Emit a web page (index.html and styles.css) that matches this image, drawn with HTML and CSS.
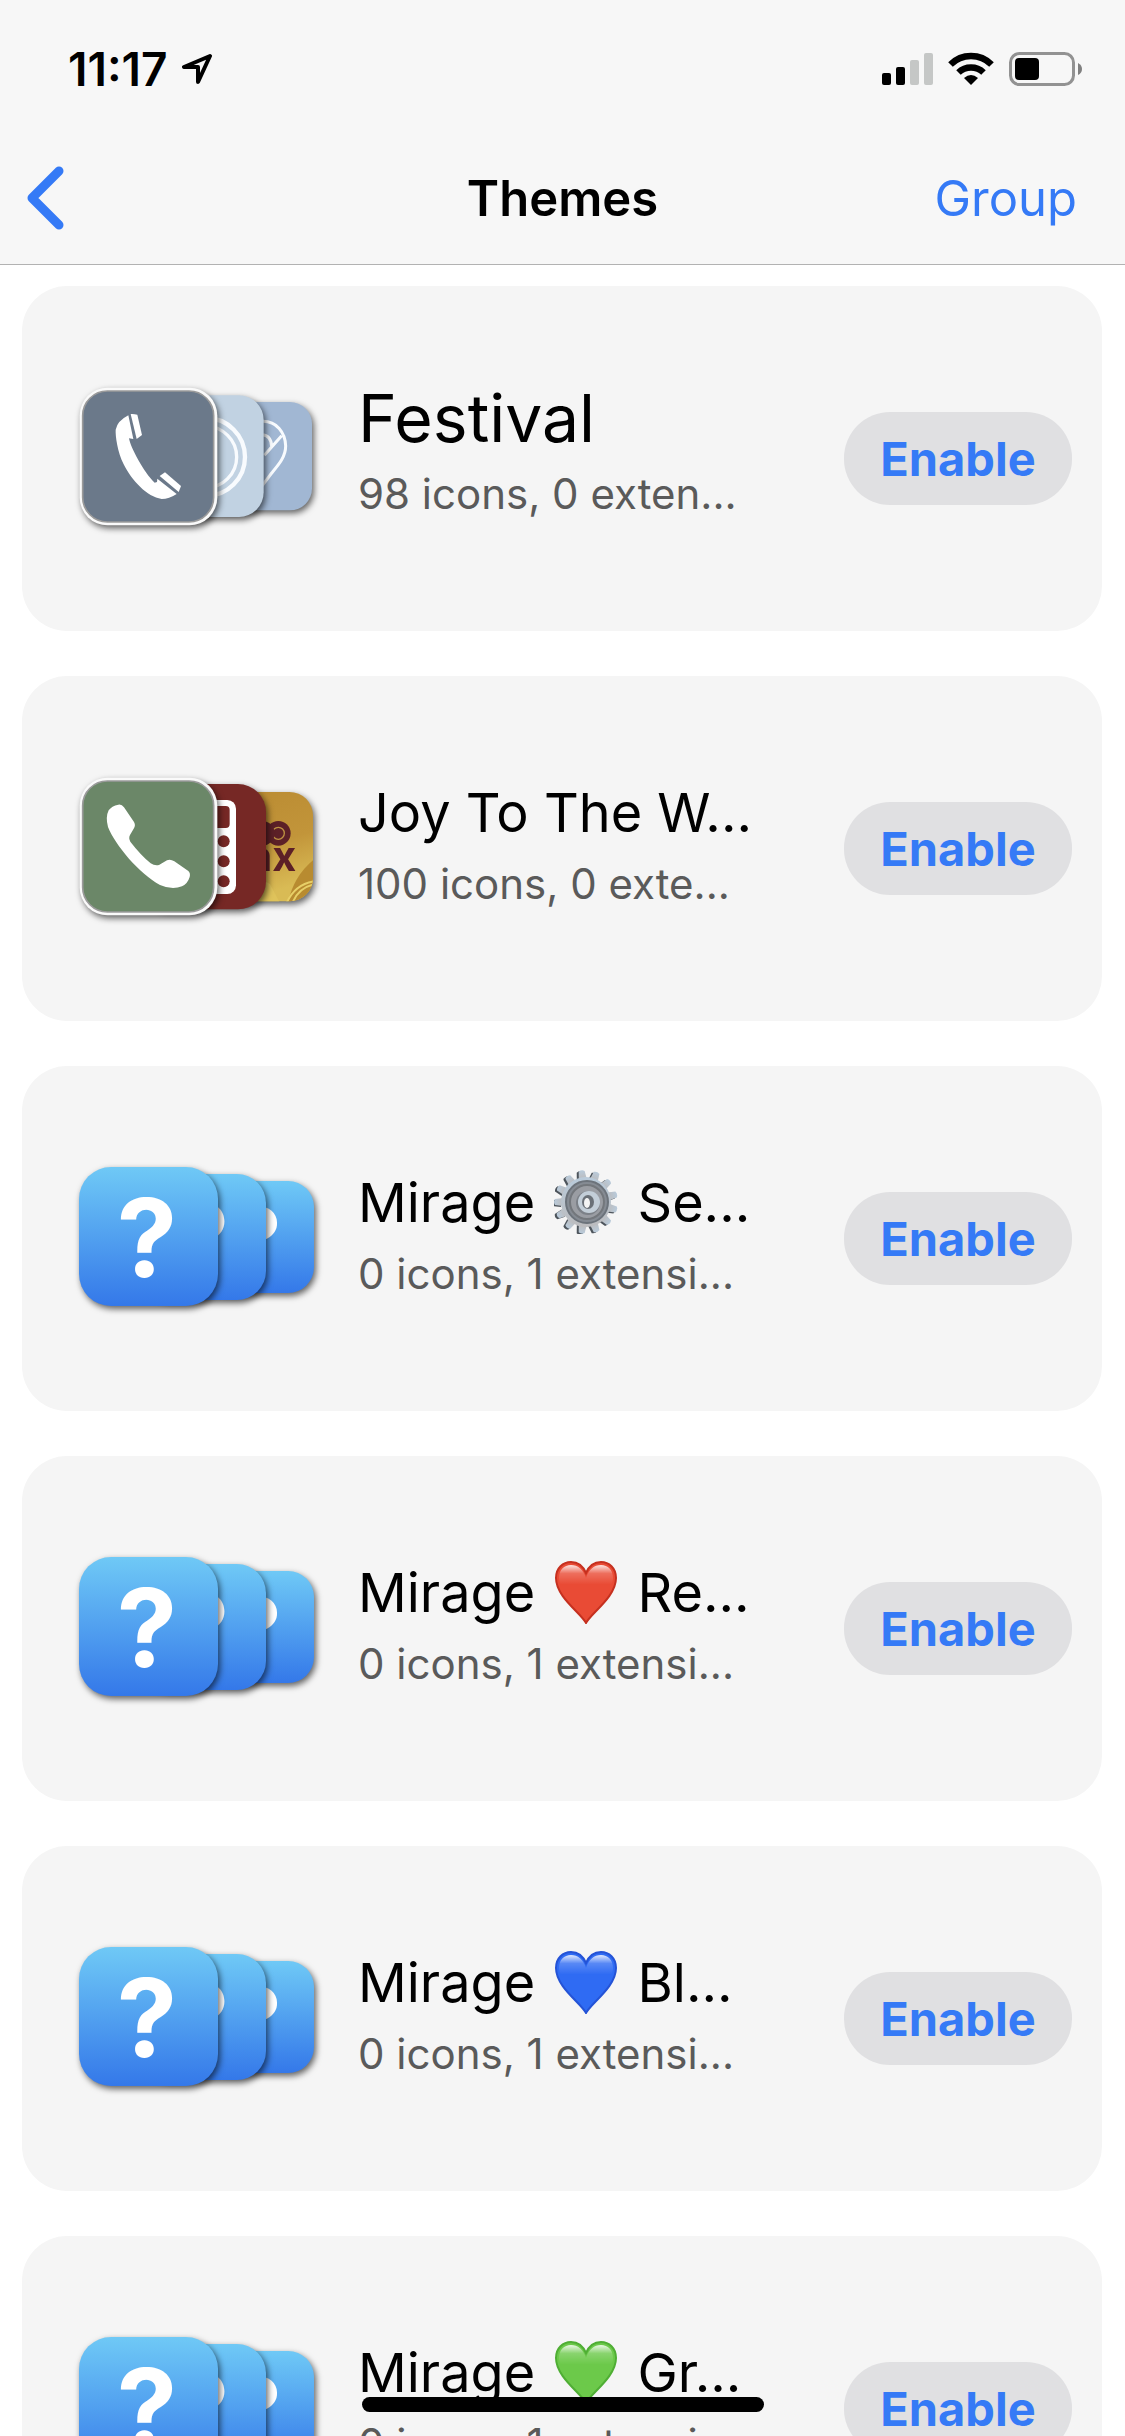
FILE: index.html
```html
<!DOCTYPE html>
<html lang="en">
<head>
    <meta charset="UTF-8">
    <meta name="viewport" content="width=device-width, initial-scale=1.0">
    <title>Themes</title>
    <link rel="stylesheet" href="styles.css">
</head>
<body>
    <!-- Shared icon artwork -->
    <svg class="defs" aria-hidden="true">
        <defs>
            <linearGradient id="blueFade" x1="0" y1="0" x2="0" y2="1">
                <stop offset="0" stop-color="#6fc9f6"/>
                <stop offset="1" stop-color="#3478e9"/>
            </linearGradient>
            <linearGradient id="goldFade" x1="0" y1="0" x2="0.3" y2="1">
                <stop offset="0" stop-color="#b98a31"/>
                <stop offset="0.6" stop-color="#c2953a"/>
                <stop offset="1" stop-color="#d9bb55"/>
            </linearGradient>
            <linearGradient id="gearFade" x1="0" y1="0" x2="0" y2="1">
                <stop offset="0" stop-color="#b9cbdb"/>
                <stop offset="1" stop-color="#bcbcbe"/>
            </linearGradient>
            <linearGradient id="shine" x1="0" y1="0" x2="0" y2="1">
                <stop offset="0" stop-color="#fff" stop-opacity="0.85"/>
                <stop offset="0.3" stop-color="#fff" stop-opacity="0.2"/>
                <stop offset="0.7" stop-color="#fff" stop-opacity="0"/>
            </linearGradient>
            <path id="heartShape" d="M32 63C27 53 2 37 2 18C2 8 9 2 17 2C24 2 29 6 32 13C35 6 40 2 47 2C55 2 62 8 62 18C62 37 37 53 32 63Z"/>
            <path id="heartShine" d="M32 18C29 9 24 5 17 5C10 5 5 10 5 18C5 28 15 33 32 33C49 33 59 28 59 18C59 10 54 5 47 5C40 5 35 9 32 18Z"/>
            <symbol id="unknownIcon" viewBox="0 0 139 139">
                <rect width="139" height="139" rx="32" fill="url(#blueFade)"/>
                <text class="icon-question" x="68" y="110" text-anchor="middle">?</text>
            </symbol>
            <path id="tooth" d="M28 9L29 1Q32 -1 35 1L36 9Z"/>
            <g id="teeth">
                <use href="#tooth" transform="rotate(-8 32 32)"/>
                <use href="#tooth" transform="rotate(20 32 32)"/>
                <use href="#tooth" transform="rotate(48 32 32)"/>
                <use href="#tooth" transform="rotate(76 32 32)"/>
                <use href="#tooth" transform="rotate(104 32 32)"/>
                <use href="#tooth" transform="rotate(132 32 32)"/>
                <use href="#tooth" transform="rotate(160 32 32)"/>
                <use href="#tooth" transform="rotate(188 32 32)"/>
                <use href="#tooth" transform="rotate(216 32 32)"/>
                <use href="#tooth" transform="rotate(244 32 32)"/>
                <use href="#tooth" transform="rotate(270 32 32)"/>
                <use href="#tooth" transform="rotate(297 32 32)"/>
                <use href="#tooth" transform="rotate(324 32 32)"/>
            </g>
        </defs>
    </svg>

    <header class="header">
        <div class="status-bar">
            <div class="status-left">
                <span class="time">11:17</span>
                <svg class="location" viewBox="0 0 31 32" aria-hidden="true">
                    <path d="M28 3L2 14H16V29Z" fill="none" stroke="#000" stroke-width="4" stroke-linejoin="round"/>
                </svg>
            </div>
            <div class="status-right">
                <svg class="signal" viewBox="0 0 51 34" aria-hidden="true">
                    <rect x="0" y="21" width="9" height="12" rx="2"/>
                    <rect x="14" y="15" width="9" height="18" rx="2"/>
                    <rect x="28" y="8" width="9" height="25" rx="2" fill="#c5c7c6"/>
                    <rect x="42" y="1" width="9" height="32" rx="2" fill="#c5c7c6"/>
                </svg>
                <svg class="wifi" viewBox="0 0 46 34" aria-hidden="true">
                    <path d="M2.500 12.500A29 29 0 0 1 43.500 12.500" fill="none" stroke="#000" stroke-width="6.500"/>
                    <path d="M10.500 20.500A18 18 0 0 1 35.500 20.500" fill="none" stroke="#000" stroke-width="6.500"/>
                    <path d="M23 33L16 26Q23 20 30 26Z"/>
                </svg>
                <svg class="battery" viewBox="0 0 74 34" aria-hidden="true">
                    <rect x="1.500" y="1.500" width="63" height="31" rx="9" fill="none" stroke="#929292" stroke-width="3"/>
                    <rect x="6" y="6" width="24" height="22" rx="4"/>
                    <path d="M69 11Q73 13 73 17T69 23Z" fill="#808080"/>
                </svg>
            </div>
        </div>
        <nav class="nav-bar">
            <a class="back" href="#" aria-label="Back">
                <svg class="chevron" viewBox="0 0 38 64" aria-hidden="true">
                    <path d="M33 5L6 32L33 59" fill="none" stroke="#357af6" stroke-width="9" stroke-linecap="round" stroke-linejoin="round"/>
                </svg>
            </a>
            <h1 class="nav-title">Themes</h1>
            <button class="group-btn" type="button">Group</button>
        </nav>
    </header>

    <main>
        <ul class="theme-list">
            <li class="theme">
                <div class="icons">
                    <svg class="icon icon-front" viewBox="56 82 417 417" aria-hidden="true">
                        <rect x="58" y="84" width="413" height="413" rx="84" fill="#fafafa"/>
                        <rect x="67" y="94" width="393" height="393" rx="74" fill="#6b798a" stroke="#9a9a9a" stroke-width="5"/>
                        <path fill="#fff" d="M204 167L219 238L206 236C210 262 250 338 283 369L290 367L291 357L349 403Q326 418 304 418C260 412 214 362 190 314C171 276 165 228 166 210Q171 184 204 167Z"/>
                        <path fill="#fff" d="M211 163Q220 162 231 165L245 226L229 238Z"/>
                        <path fill="#fff" d="M298 349L314 338L362 379L355 397Z"/>
                    </svg>
                    <svg class="icon icon-middle" viewBox="240 103 378 378" aria-hidden="true">
                        <rect x="243" y="107" width="368" height="365" rx="74" fill="#c1d2e2"/>
                        <circle cx="438" cy="292" r="117" fill="none" stroke="#f8fbfe" stroke-width="13"/>
                        <circle cx="438" cy="292" r="92" fill="none" stroke="#f8fbfe" stroke-width="10"/>
                    </svg>
                    <svg class="icon icon-back" viewBox="426 125 336 336" aria-hidden="true">
                        <rect x="429" y="128" width="327" height="325" rx="66" fill="#a1b7d3"/>
                        <path d="M605 186C650 184 676 220 677 260C677 293 655 317 635 341L600 388M665 229L613 288M605 226C624 227 634 240 635 261" fill="none" stroke="#f8fbfe" stroke-width="9"/>
                    </svg>
                </div>
                <div class="theme-text">
                    <h2 class="theme-title large">Festival</h2>
                    <p class="theme-info">98 icons, 0 exten...</p>
                </div>
                <button class="enable-btn" type="button">Enable</button>
            </li>

            <li class="theme">
                <div class="icons">
                    <svg class="icon icon-front" viewBox="56 82 417 417" aria-hidden="true">
                        <rect x="58" y="84" width="413" height="413" rx="84" fill="#fafafa"/>
                        <rect x="67" y="94" width="393" height="393" rx="74" fill="#6b8768" stroke="#9a9a9a" stroke-width="5"/>
                        <path fill="#fff" d="M174 165Q184 163 191 173L221 217Q227 227 220 237L209 256Q204 265 210 276Q240 315 271 341Q283 349 296 346L320 332Q330 327 342 335L384 364Q391 370 388 382Q382 402 365 410Q335 422 299 406C238 373 164 286 143 232Q135 202 145 182Q154 169 174 165Z"/>
                    </svg>
                    <svg class="icon icon-middle" viewBox="240 103 378 378" aria-hidden="true">
                        <rect x="240" y="103" width="378" height="376" rx="84" fill="#762825"/>
                        <rect x="334" y="151" width="194" height="282" rx="26" fill="#fff"/>
                        <rect x="353" y="169" width="156" height="66" rx="12" fill="#762825"/>
                        <circle cx="491" cy="275" r="18" fill="#762825"/>
                        <circle cx="491" cy="335" r="18" fill="#762825"/>
                        <circle cx="491" cy="395" r="18" fill="#762825"/>
                    </svg>
                    <svg class="icon icon-back" viewBox="426 125 336 336" aria-hidden="true">
                        <clipPath id="goldClip"><rect x="426" y="128" width="333" height="328" rx="70"/></clipPath>
                        <g clip-path="url(#goldClip)">
                            <rect x="426" y="125" width="336" height="336" fill="url(#goldFade)"/>
                            <path d="M590 380L630 405L660 461H590Z" fill="#dfc35b"/>
                            <path d="M762 330Q700 380 684 461H762Z" fill="#b88b30"/>
                            <path d="M680 461Q705 405 762 396M697 461Q715 416 762 405" fill="none" stroke="#e7cf67" stroke-width="6"/>
                        </g>
                        <circle cx="655" cy="252" r="37" fill="#5c2027"/>
                        <circle cx="655" cy="252" r="18" fill="none" stroke="#bd9142" stroke-width="4"/>
                        <circle cx="607" cy="252" r="37" fill="#5c2027"/>
                        <text class="icon-max" x="709" y="365" text-anchor="end">max</text>
                    </svg>
                </div>
                <div class="theme-text">
                    <h2 class="theme-title">Joy To The W...</h2>
                    <p class="theme-info">100 icons, 0 exte...</p>
                </div>
                <button class="enable-btn" type="button">Enable</button>
            </li>

            <li class="theme">
                <div class="icons">
                    <svg class="icon icon-front" aria-hidden="true"><use href="#unknownIcon"/></svg>
                    <svg class="icon icon-middle" aria-hidden="true"><use href="#unknownIcon"/></svg>
                    <svg class="icon icon-back" aria-hidden="true"><use href="#unknownIcon"/></svg>
                </div>
                <div class="theme-text">
                    <h2 class="theme-title">Mirage
                        <svg class="emoji" viewBox="0 0 64 64" role="img" aria-label="gear">
                            <use href="#teeth" x="-2" y="1" fill="#4d545b"/>
                            <use href="#teeth" fill="url(#gearFade)"/>
                            <circle cx="32" cy="32" r="25" fill="url(#gearFade)"/>
                            <circle cx="33" cy="32" r="21" fill="#858b93" stroke="#6c737b" stroke-width="2"/>
                            <circle cx="33" cy="32" r="17" fill="#9a9da3" stroke="#73777c" stroke-width="2"/>
                            <circle cx="34" cy="33" r="12" fill="#7c8188"/>
                            <circle cx="35" cy="32" r="11" fill="#c3ced8"/>
                            <ellipse cx="34" cy="32" rx="6" ry="7" fill="#6a7077"/>
                            <ellipse cx="33" cy="33" rx="3" ry="5" fill="#f4f4f4"/>
                        </svg>
                        Se...</h2>
                    <p class="theme-info">0 icons, 1 extensi...</p>
                </div>
                <button class="enable-btn" type="button">Enable</button>
            </li>

            <li class="theme">
                <div class="icons">
                    <svg class="icon icon-front" aria-hidden="true"><use href="#unknownIcon"/></svg>
                    <svg class="icon icon-middle" aria-hidden="true"><use href="#unknownIcon"/></svg>
                    <svg class="icon icon-back" aria-hidden="true"><use href="#unknownIcon"/></svg>
                </div>
                <div class="theme-text">
                    <h2 class="theme-title">Mirage
                        <svg class="emoji" viewBox="0 0 64 64" role="img" aria-label="red heart">
                            <use href="#heartShape" fill="#e94b35" stroke="#c5301f" stroke-width="2"/>
                            <use href="#heartShine" fill="url(#shine)"/>
                        </svg>
                        Re...</h2>
                    <p class="theme-info">0 icons, 1 extensi...</p>
                </div>
                <button class="enable-btn" type="button">Enable</button>
            </li>

            <li class="theme">
                <div class="icons">
                    <svg class="icon icon-front" aria-hidden="true"><use href="#unknownIcon"/></svg>
                    <svg class="icon icon-middle" aria-hidden="true"><use href="#unknownIcon"/></svg>
                    <svg class="icon icon-back" aria-hidden="true"><use href="#unknownIcon"/></svg>
                </div>
                <div class="theme-text">
                    <h2 class="theme-title">Mirage
                        <svg class="emoji" viewBox="0 0 64 64" role="img" aria-label="blue heart">
                            <use href="#heartShape" fill="#2f6bf3" stroke="#2453d6" stroke-width="2"/>
                            <use href="#heartShine" fill="url(#shine)"/>
                        </svg>
                        Bl...</h2>
                    <p class="theme-info">0 icons, 1 extensi...</p>
                </div>
                <button class="enable-btn" type="button">Enable</button>
            </li>

            <li class="theme">
                <div class="icons">
                    <svg class="icon icon-front" aria-hidden="true"><use href="#unknownIcon"/></svg>
                    <svg class="icon icon-middle" aria-hidden="true"><use href="#unknownIcon"/></svg>
                    <svg class="icon icon-back" aria-hidden="true"><use href="#unknownIcon"/></svg>
                </div>
                <div class="theme-text">
                    <h2 class="theme-title">Mirage
                        <svg class="emoji" viewBox="0 0 64 64" role="img" aria-label="green heart">
                            <use href="#heartShape" fill="#6cc94a" stroke="#4fae34" stroke-width="2"/>
                            <use href="#heartShine" fill="url(#shine)"/>
                        </svg>
                        Gr...</h2>
                    <p class="theme-info">0 icons, 1 extensi...</p>
                </div>
                <button class="enable-btn" type="button">Enable</button>
            </li>
        </ul>
    </main>

    <div class="home-indicator"></div>
</body>
</html>
```

FILE: styles.css
```css
* {
    box-sizing: border-box;
}

body {
    margin: 0;
    height: 100vh;
    overflow: hidden;
    background-color: #fff;
    color: #000;
    font-family: Inter, "Liberation Sans", sans-serif;
}

h1, h2, p, ul {
    margin: 0;
    padding: 0;
    font-weight: 400;
}

button {
    border: none;
    font-family: inherit;
    color: #357af6;
    cursor: pointer;
}

.defs {
    position: absolute;
    width: 0;
    height: 0;
}

/* Header */
.header {
    background-color: #f7f7f7;
    border-bottom: 1px solid #b2b2b2;
}

.status-bar {
    display: flex;
    justify-content: space-between;
    align-items: center;
    height: 132px;
    padding: 6px 42px 0 68px;
}

.status-left {
    display: flex;
    align-items: center;
    gap: 14px;
}

.time {
    font-size: 46px;
    font-weight: 600;
}

.location {
    width: 31px;
    height: 32px;
}

.status-right {
    display: flex;
    align-items: center;
    gap: 15px;
}

.signal {
    width: 51px;
    height: 34px;
}

.wifi {
    width: 46px;
    height: 34px;
}

.battery {
    width: 74px;
    height: 34px;
}

.nav-bar {
    display: grid;
    grid-template-columns: 1fr auto 1fr;
    align-items: center;
    height: 132px;
    padding: 0 48px;
}

.back {
    justify-self: start;
    display: flex;
    margin-left: -22px;
}

.chevron {
    width: 38px;
    height: 64px;
}

.nav-title {
    font-size: 49px;
    font-weight: 600;
}

.group-btn {
    justify-self: end;
    padding: 0;
    background: none;
    font-size: 49px;
}

/* Theme cards */
.theme-list {
    display: flex;
    flex-direction: column;
    gap: 45px;
    padding: 21px 23px 45px 22px;
    list-style: none;
}

.theme {
    display: flex;
    align-items: center;
    height: 345px;
    padding: 0 30px 0 57px;
    border-radius: 45px;
    background-color: #f5f5f5;
}

.icons {
    display: flex;
    align-items: center;
    flex-shrink: 0;
    margin-right: 44px;
    padding-bottom: 4px;
}

.icon {
    position: relative;
    filter: drop-shadow(2px 3px 3px rgba(0, 0, 0, 0.6));
}

.icon-front {
    z-index: 3;
    width: 139px;
    height: 139px;
}

.icon-middle {
    z-index: 2;
    width: 126px;
    height: 126px;
    margin-left: -78px;
}

.icon-back {
    z-index: 1;
    width: 112px;
    height: 112px;
    margin-left: -64px;
}

.icon-question {
    font-size: 108px;
    font-weight: 700;
    fill: #fff;
}

.icon-max {
    font-size: 124px;
    font-weight: 700;
    fill: #5c2027;
}

.theme-text {
    flex: 1;
    min-width: 0;
    padding-bottom: 20px;
    white-space: nowrap;
}

.theme-title {
    font-size: 54px;
    line-height: 90px;
}

.theme-title.large {
    padding-bottom: 10px;
    font-size: 66px;
    line-height: 80px;
}

.theme-info {
    font-size: 42px;
    line-height: 52px;
    color: #5a5a5a;
}

.emoji {
    width: 64px;
    height: 64px;
    margin: 0 4px;
    vertical-align: -12px;
}

.enable-btn {
    flex-shrink: 0;
    width: 228px;
    height: 93px;
    padding: 0;
    border-radius: 46px;
    background-color: #e0e0e2;
    font-size: 47px;
    font-weight: 700;
}

.home-indicator {
    position: fixed;
    bottom: 24px;
    left: 50%;
    width: 402px;
    height: 15px;
    margin-left: -201px;
    border-radius: 8px;
    background-color: #000;
    z-index: 5;
}
```
